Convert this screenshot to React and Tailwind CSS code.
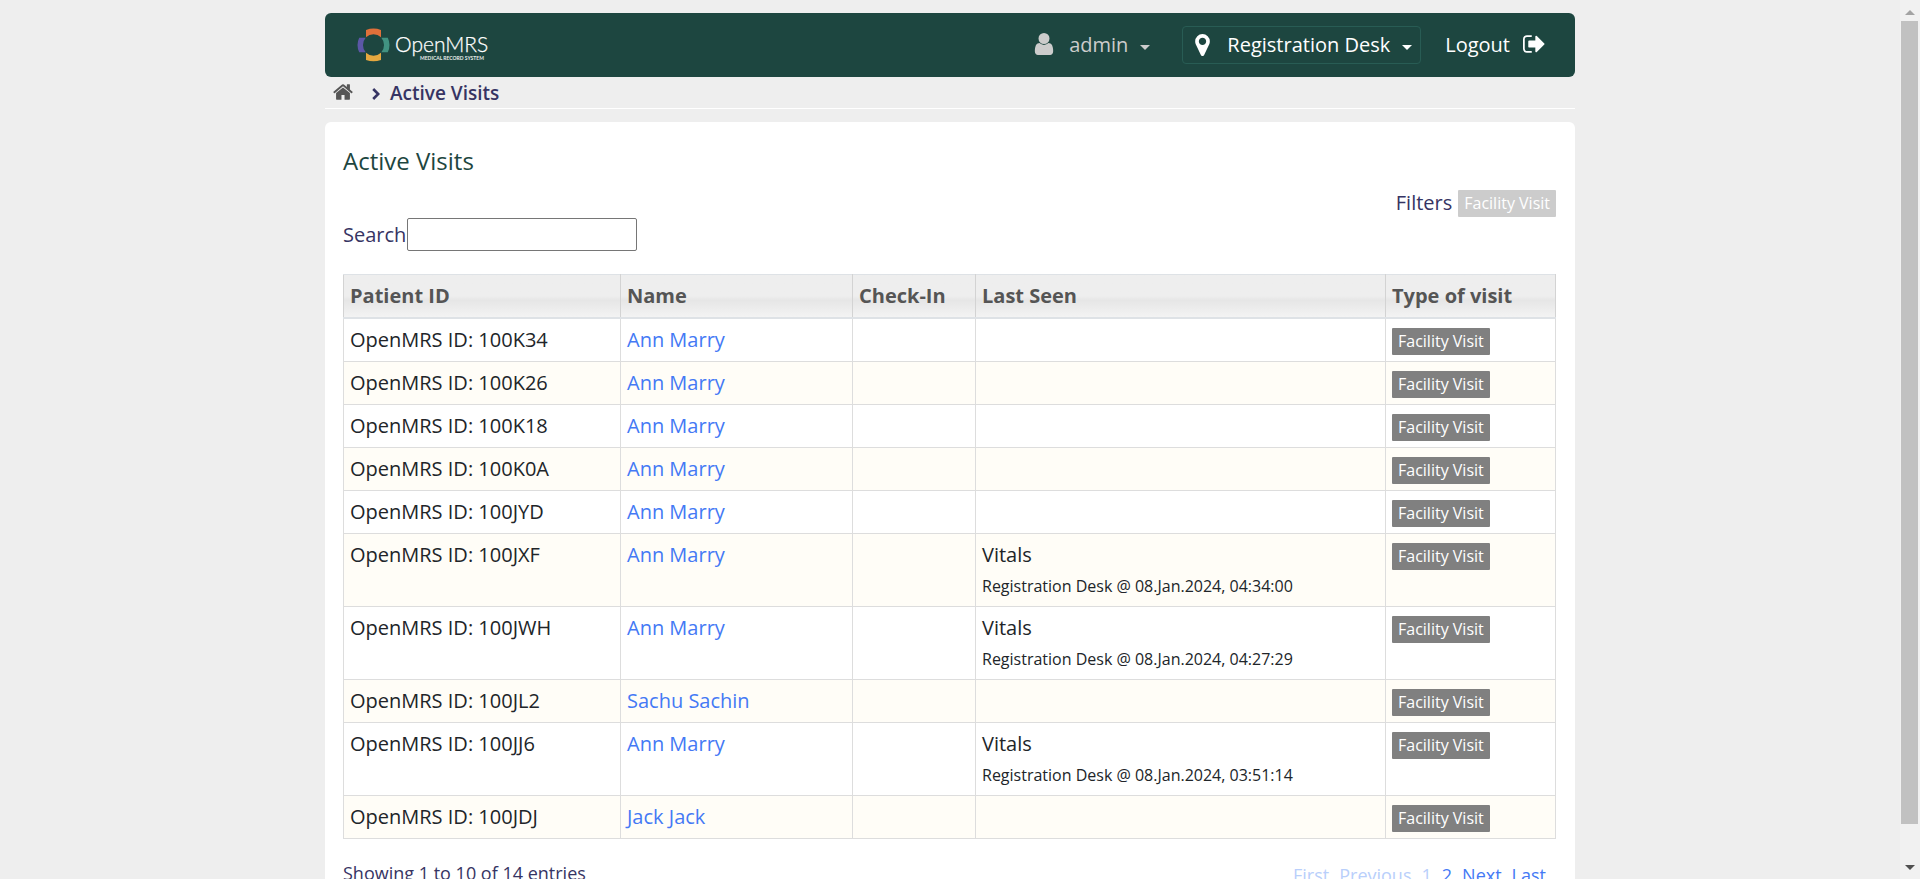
import React from 'react';

const ICONS = {
  home: 'M1472 992v480q0 26-19 45t-45 19h-384v-384h-256v384h-384q-26 0-45-19t-19-45v-480q0-1 .5-3t.5-3l575-474 575 474q1 2 1 6zm223-69l-62 74q-8 9-21 11h-3q-13 0-21-7l-692-577-692 577q-12 8-24 7-13-2-21-11l-62-74q-8-10-7-23.5t11-21.5l719-599q32-26 76-26t76 26l244 204v-195q0-14 9-23t23-9h192q14 0 23 9t9 23v408l219 182q10 8 11 21.5t-7 23.5z',
  user: 'M1536 1399q0 109-62.5 187t-150.5 78h-854q-88 0-150.5-78t-62.5-187q0-85 8.5-160.5t31.5-152 58.5-131 94-89 134.5-34.5q131 128 313 128t313-128q76 0 134.5 34.5t94 89 58.5 131 31.5 152 8.5 160.5zm-256-887q0 159-112.5 271.5t-271.5 112.5-271.5-112.5-112.5-271.5 112.5-271.5 271.5-112.5 271.5 112.5 112.5 271.5z',
  marker: 'M1152 640q0-106-75-181t-181-75-181 75-75 181 75 181 181 75 181-75 75-181zm256 0q0 109-33 179l-364 774q-16 33-47.5 52t-67.5 19-67.5-19-46.5-52l-365-774q-33-70-33-179 0-212 150-362t362-150 362 150 150 362z',
  signOut: 'M704 1440q0 4 1 20t.5 26.5-3 23.5-10 19.5-20.5 6.5h-320q-119 0-203.5-84.5t-84.5-203.5v-704q0-119 84.5-203.5t203.5-84.5h320q13 0 22.5 9.5t9.5 22.5q0 4 1 20t.5 26.5-3 23.5-10 19.5-20.5 6.5h-320q-66 0-113 47t-47 113v704q0 66 47 113t113 47h312l11.5 1 11.5 3 8 5.5 7 9 2 13.5zm928-544q0 26-19 45l-544 544q-19 19-45 19t-45-19-19-45v-288h-448q-26 0-45-19t-19-45v-384q0-26 19-45t45-19h448v-288q0-26 19-45t45-19 45 19l544 544q19 19 19 45z',
};

function Icon({ name, box, className }) {
  return (
    <svg aria-hidden="true" viewBox={box} className={className} fill="currentColor">
      <path d={ICONS[name]} />
    </svg>
  );
}

function Caret() {
  return (
    <svg aria-hidden="true" viewBox="0 0 10 5" className="mt-1 h-[5px] w-[10px]" fill="currentColor">
      <path d="M0 0h10L5 5z" />
    </svg>
  );
}

function Logo() {
  return (
    <svg viewBox="0 0 132 36" className="h-9 w-[132px]" role="img" aria-label="OpenMRS Medical Record System">
      <path d="M9 2.9Q16.500 0.100 24 2.900V10.200A11 11 0 0 0 9 10.200z" fill="#e0703a" />
      <path d="M9 33Q16.500 35.700 24 33V25.700A11 11 0 0 1 9 25.700z" fill="#e5a83f" />
      <path d="M2.200 10.700Q-1.200 17.900 2.200 25.200H8.700A11 11 0 0 1 8.700 10.700z" fill="#5b57a6" />
      <path d="M30.800 10.700Q34.200 17.900 30.800 25.200H24.300A11 11 0 0 0 24.300 10.700z" fill="#419281" />
      <text x="38" y="25" fontSize="21" fill="#fff" stroke="#fff" strokeWidth="0.250" fontFamily="Lato, sans-serif" fontWeight="300">OpenMRS</text>
      <text x="63" y="33" fontSize="5" fill="#e6edea" fontFamily="Lato, sans-serif" fontWeight="700">MEDICAL RECORD SYSTEM</text>
    </svg>
  );
}

function Tag() {
  return (
    <span className="inline-block rounded-[1px] bg-[#808080] px-1.5 py-[3px] align-top text-base leading-[21px] font-normal text-white">
      Facility Visit
    </span>
  );
}

const VISITS = [
  { id: '100K34', name: 'Ann Marry' },
  { id: '100K26', name: 'Ann Marry' },
  { id: '100K18', name: 'Ann Marry' },
  { id: '100K0A', name: 'Ann Marry' },
  { id: '100JYD', name: 'Ann Marry' },
  { id: '100JXF', name: 'Ann Marry', seen: '04:34:00' },
  { id: '100JWH', name: 'Ann Marry', seen: '04:27:29' },
  { id: '100JL2', name: 'Sachu Sachin' },
  { id: '100JJ6', name: 'Ann Marry', seen: '03:51:14' },
  { id: '100JDJ', name: 'Jack Jack' },
];

const COLUMNS = [
  { label: 'Patient ID', width: 'w-[277px]' },
  { label: 'Name', width: 'w-[232px]' },
  { label: 'Check-In', width: 'w-[123px]' },
  { label: 'Last Seen', width: '' },
  { label: 'Type of visit', width: 'w-[170px]' },
];

const CELL = 'border border-[#dddddd] px-1.5';

function Header() {
  return (
    <header className="flex h-16 items-center justify-between rounded-md bg-[#1d4640] pr-[30px] pl-8 text-xl text-white">
      <a href="#home"><Logo /></a>
      <nav className="flex items-center">
        <button className="mr-8 flex items-center text-[#cccccc]">
          <Icon name="user" box="256 128 1280 1536" className="mr-[15px] mb-0.5 h-[22px] w-5" />
          <span className="mr-3">admin</span>
          <Caret />
        </button>
        <button className="mr-6 flex h-[38px] items-center rounded-sm border border-[#285c54] pr-2 pl-3">
          <Icon name="marker" box="384 128 1024 1536" className="mr-[17px] h-[22px] w-[15px]" />
          <span className="mr-3">Registration Desk</span>
          <Caret />
        </button>
        <a href="#logout" className="flex items-center">
          <span className="mr-[13px]">Logout</span>
          <Icon name="signOut" box="64 256 1600 1280" className="mb-0.5 h-[18px] w-[22px]" />
        </a>
      </nav>
    </header>
  );
}

function Scrollbar() {
  return (
    <div aria-hidden="true" className="flex w-5 shrink-0 flex-col bg-[#f1f1f1] pr-0.5 pl-px">
      <div className="flex h-[21px] items-center justify-center">
        <svg viewBox="0 0 10 5" className="mt-1 h-[5px] w-[10px]" fill="#a3a3a3"><path d="M0 5h10L5 0z" /></svg>
      </div>
      <div className="grow bg-[#c1c1c1]" />
      <div className="flex h-[55px] items-end justify-center pb-[9px]">
        <svg viewBox="0 0 10 5" className="h-[5px] w-[10px]" fill="#505050"><path d="M0 0h10L5 5z" /></svg>
      </div>
    </div>
  );
}

export default function App() {
  return (
    <div className="flex h-screen overflow-hidden bg-[#eeeeee] font-['Open_Sans',sans-serif] text-[#363463]">
      <div className="grow overflow-y-auto [scrollbar-width:none]">
        <div className="mx-auto max-w-[1250px] pt-[13px]">
          <Header />
          <nav aria-label="Breadcrumb" className="mb-[13px] flex h-8 items-center border-b border-white pl-2 text-[19px] font-semibold">
            <a href="#home" aria-label="Home" className="text-[#555555]">
              <Icon name="home" box="64 256 1664 1280" className="mb-0.5 h-4 w-5" />
            </a>
            <svg aria-hidden="true" viewBox="0 0 8 12" className="mt-0.5 mr-[10px] ml-[19px] h-3 w-2" fill="none" stroke="currentColor" strokeWidth="2.600">
              <path d="M1.200 1l5 5-5 5" />
            </svg>
            <span className="pt-px">Active Visits</span>
          </nav>
          <main className="rounded-md bg-white pt-[19px] pr-[19px] pb-8 pl-[18px]">
            <h1 className="text-2xl leading-10 text-[#1d4640]">Active Visits</h1>
            <div className="mt-2 flex items-center justify-end gap-1.5 text-xl leading-7">
              <span>Filters</span>
              <button className="rounded-[1px] bg-[#cccccc] px-1.5 py-[3px] text-base leading-[21px] font-normal text-white">Facility Visit</button>
            </div>
            <div className="mt-px flex items-center gap-px text-xl">
              <label htmlFor="visit-search">Search</label>
              <input id="visit-search" type="text" className="h-[33px] w-[230px] rounded-xs border border-[#767676] bg-white px-1 outline-none" />
            </div>
            <table className="mt-[23px] w-full table-fixed border-collapse text-xl leading-[30px]">
              <thead>
                <tr className="border-b-2 border-[#dee2e6] bg-linear-to-b from-[#eeeeee] from-50% via-[#e6e6e6] via-60% to-[#f3f3f3] text-left text-[#555555]">
                  {COLUMNS.map((c) => (
                    <th key={c.label} className={`${c.width} border border-b-2 border-[#d3d3d3] border-t-[#dee2e6] border-b-[#dee2e6] px-1.5 py-1.5 font-bold`}>{c.label}</th>
                  ))}
                </tr>
              </thead>
              <tbody className="text-[#212529]">
                {VISITS.map((v) => (
                  <tr key={v.id} className="align-top even:bg-[#fffdf7]">
                    <td className={`${CELL} py-1.5`}>OpenMRS ID: {v.id}</td>
                    <td className={`${CELL} py-1.5`}><a href={`#${v.id}`} className="text-[#4479f5]">{v.name}</a></td>
                    <td className={CELL}></td>
                    <td className={`${CELL} py-1.5`}>
                      {v.seen && (
                        <>
                          <div>Vitals</div>
                          <div className="pt-0.5 text-base leading-7">Registration Desk @ 08.Jan.2024, {v.seen}</div>
                        </>
                      )}
                    </td>
                    <td className={`${CELL} pt-[9px]`}><Tag /></td>
                  </tr>
                ))}
              </tbody>
            </table>
            <div className="mt-5 flex justify-between text-lg">
              <p>Showing 1 to 10 of 14 entries</p>
              <nav aria-label="Pagination" className="mr-[10px] flex gap-2.5 pt-0.5 text-[#4479f5]">
                <a href="#first" className="text-[#b9cffb]">First</a>
                <a href="#previous" className="text-[#b9cffb]">Previous</a>
                <a href="#p1" className="text-[#b9cffb]">1</a>
                <a href="#p2">2</a>
                <a href="#next">Next</a>
                <a href="#last">Last</a>
              </nav>
            </div>
          </main>
        </div>
      </div>
      <Scrollbar />
    </div>
  );
}
